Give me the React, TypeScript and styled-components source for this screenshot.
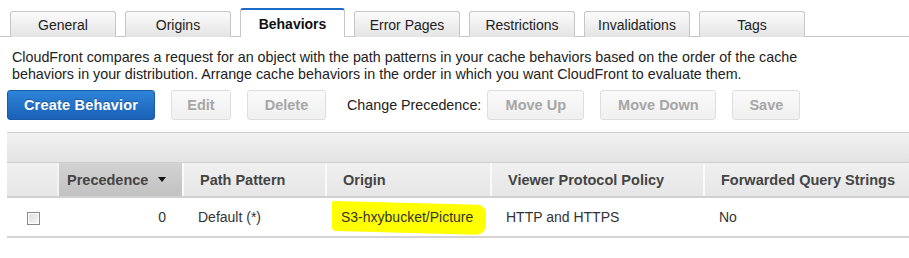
import React from "react";
import styled, { createGlobalStyle, css } from "styled-components";

const Global = createGlobalStyle`
  html, body { margin: 0; padding: 0; background: #fff; }
  body { font-family: "Liberation Sans", Arial, sans-serif; color: #222; overflow: hidden; }
`;

const Page = styled.div`
  width: 909px;
  height: 258px;
  overflow: hidden;
`;

const TabBar = styled.div`
  display: flex;
  align-items: flex-end;
  gap: 9px;
  height: 37px;
  padding-left: 10px;
  box-sizing: border-box;
  border-bottom: 1px solid #c6c6c6;
`;

const Tab = styled.div<{ $active?: boolean }>`
  box-sizing: border-box;
  width: 106px;
  height: 26px;
  margin-bottom: -1px;
  display: flex;
  align-items: center;
  justify-content: center;
  font-size: 14px;
  color: #222;
  border: 1px solid #c6c6c6;
  border-bottom: none;
  border-radius: 3px 3px 0 0;
  background: linear-gradient(#fbfbfb, #e4e4e4);
  ${(p) =>
    p.$active &&
    css`
      height: 29px;
      width: 105px;
      background: #fff;
      border-top: 2px solid #1c6bc6;
      font-weight: bold;
      color: #111;
    `}
`;

const Intro = styled.p`
  margin: 12px 0 0 0;
  padding-left: 12px;
  font-size: 14.3px;
  line-height: 17px;
  color: #222;
  width: 830px;
`;

const Toolbar = styled.div`
  display: flex;
  align-items: center;
  gap: 16px;
  margin-top: 7px;
  padding-left: 7px;
`;

const Button = styled.button<{ $primary?: boolean; $w: number }>`
  box-sizing: border-box;
  width: ${(p) => p.$w}px;
  height: 30px;
  font-family: "Liberation Sans", Arial, sans-serif;
  font-weight: bold;
  font-size: 14.5px;
  border-radius: 3px;
  padding: 0;
  cursor: default;
  ${(p) =>
    p.$primary
      ? css`
          color: #fff;
          background: linear-gradient(#2d84da, #1a61b6);
          border: 1px solid #1a5aa6;
          text-shadow: 0 -1px 0 rgba(0, 0, 0, 0.3);
          letter-spacing: 0.2px;
        `
      : css`
          color: #a6a6a6;
          background: linear-gradient(#fafafa, #f0f0f0);
          border: 1px solid #dedede;
        `}
`;

const ToolLabel = styled.span`
  font-size: 14.3px;
  color: #222;
  margin-left: 5px;
  margin-right: -10px;
`;

const Table = styled.div`
  margin-top: 12px;
  margin-left: 7px;
  width: 902px;
`;

const Band = styled.div`
  height: 29px;
  border-top: 1px solid #cfcfcf;
  border-bottom: 1px solid #cfcfcf;
  background: linear-gradient(#f2f2f2, #e3e3e3);
`;

const Row = styled.div<{ $head?: boolean }>`
  display: grid;
  grid-template-columns: 50px 125px 143px 165px 213px 1fr;
  height: ${(p) => (p.$head ? 33 : 38)}px;
  border-bottom: ${(p) => (p.$head ? "2px solid #d0d0d0" : "2px solid #d4d4d4")};
  ${(p) =>
    p.$head &&
    css`
      background: linear-gradient(#f0f0f0, #e6e6e6);
    `}
`;

const HeadCell = styled.div<{ $sorted?: boolean; $first?: boolean }>`
  display: flex;
  align-items: center;
  padding-left: ${(p) => (p.$sorted ? 8 : 16)}px;
  font-size: 14.5px;
  font-weight: bold;
  color: #444;
  border-left: ${(p) => (p.$first ? "none" : "2px solid #fafafa")};
  ${(p) =>
    p.$sorted &&
    css`
      background: linear-gradient(#d2d2d2, #c2c2c2);
      border-left: 2px solid #f4f4f4;
    `}
`;

const SortArrow = styled.span`
  display: inline-block;
  margin-left: 10px;
  margin-top: -1px;
  width: 0;
  height: 0;
  border-left: 4px solid transparent;
  border-right: 4px solid transparent;
  border-top: 5px solid #111;
`;

const Cell = styled.div<{ $right?: boolean; $center?: boolean }>`
  display: flex;
  align-items: center;
  font-size: 14px;
  color: #333;
  padding: 0 16px;
  justify-content: ${(p) => (p.$right ? "flex-end" : p.$center ? "center" : "flex-start")};
`;

const Check = styled.span`
  box-sizing: border-box;
  width: 13px;
  height: 13px;
  margin-left: 3px;
  margin-top: 2px;
  border: 1px solid #8a8a8a;
  background: linear-gradient(135deg, #dcdcdc, #f8f8f8);
  box-shadow: inset 0 0 0 1px #fff;
`;

const Highlight = styled.span`
  position: relative;
  display: inline-block;
  &::before {
    content: "";
    position: absolute;
    left: -9px;
    right: -13px;
    top: -6px;
    bottom: -8px;
    background: #ffff00;
    border-radius: 2px 8px 10px 4px;
    transform: skewY(1.5deg);
    z-index: 0;
  }
  & > span {
    position: relative;
    z-index: 1;
  }
`;

const tabs = [
  "General",
  "Origins",
  "Behaviors",
  "Error Pages",
  "Restrictions",
  "Invalidations",
  "Tags",
];

export default function App() {
  return (
    <Page>
      <Global />
      <TabBar>
        {tabs.map((t) => (
          <Tab key={t} $active={t === "Behaviors"}>
            {t}
          </Tab>
        ))}
      </TabBar>
      <Intro>
        CloudFront compares a request for an object with the path patterns in your cache
        behaviors based on the order of the cache behaviors in your distribution. Arrange
        cache behaviors in the order in which you want CloudFront to evaluate them.
      </Intro>
      <Toolbar>
        <Button $primary $w={148}>Create Behavior</Button>
        <Button $w={60}>Edit</Button>
        <Button $w={79}>Delete</Button>
        <ToolLabel>Change Precedence:</ToolLabel>
        <Button $w={97}>Move Up</Button>
        <Button $w={116}>Move Down</Button>
        <Button $w={68}>Save</Button>
      </Toolbar>
      <Table>
        <Band />
        <Row $head>
          <HeadCell $first />
          <HeadCell $sorted>
            Precedence
            <SortArrow />
          </HeadCell>
          <HeadCell>Path Pattern</HeadCell>
          <HeadCell>Origin</HeadCell>
          <HeadCell>Viewer Protocol Policy</HeadCell>
          <HeadCell>Forwarded Query Strings</HeadCell>
        </Row>
        <Row>
          <Cell $center>
            <Check />
          </Cell>
          <Cell $right>0</Cell>
          <Cell>Default (*)</Cell>
          <Cell>
            <Highlight>
              <span>S3-hxybucket/Picture</span>
            </Highlight>
          </Cell>
          <Cell>HTTP and HTTPS</Cell>
          <Cell>No</Cell>
        </Row>
      </Table>
    </Page>
  );
}
